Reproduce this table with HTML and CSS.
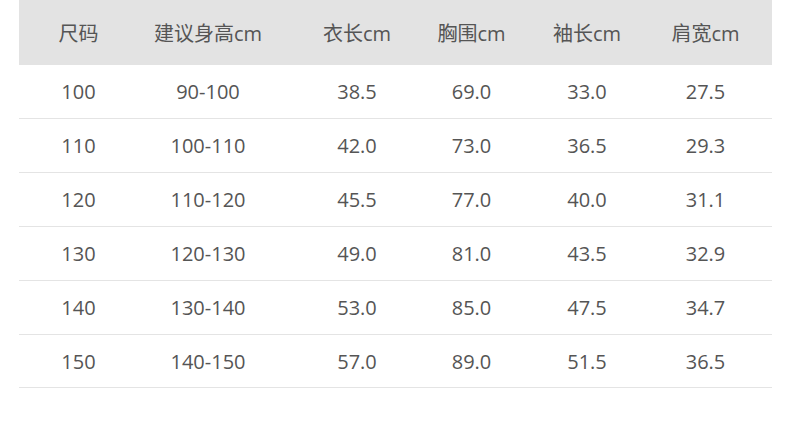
FILE: index.html
```html
<!DOCTYPE html>
<html lang="zh-CN">
<head>
<meta charset="utf-8">
<link rel="stylesheet" href="styles.css">
</head>
<body>
<div class="table">
  <div class="row head">
    <div class="c">尺码</div><div class="c">建议身高cm</div><div class="c">衣长cm</div><div class="c">胸围cm</div><div class="c">袖长cm</div><div class="c">肩宽cm</div>
  </div>
  <div class="row"><div class="c">100</div><div class="c">90-100</div><div class="c">38.5</div><div class="c">69.0</div><div class="c">33.0</div><div class="c">27.5</div></div>
  <div class="row"><div class="c">110</div><div class="c">100-110</div><div class="c">42.0</div><div class="c">73.0</div><div class="c">36.5</div><div class="c">29.3</div></div>
  <div class="row"><div class="c">120</div><div class="c">110-120</div><div class="c">45.5</div><div class="c">77.0</div><div class="c">40.0</div><div class="c">31.1</div></div>
  <div class="row"><div class="c">130</div><div class="c">120-130</div><div class="c">49.0</div><div class="c">81.0</div><div class="c">43.5</div><div class="c">32.9</div></div>
  <div class="row"><div class="c">140</div><div class="c">130-140</div><div class="c">53.0</div><div class="c">85.0</div><div class="c">47.5</div><div class="c">34.7</div></div>
  <div class="row"><div class="c">150</div><div class="c">140-150</div><div class="c">57.0</div><div class="c">89.0</div><div class="c">51.5</div><div class="c">36.5</div></div>
</div>
</body>
</html>
```
FILE: styles.css
```css
html, body {
  margin: 0;
  padding: 0;
  background: #ffffff;
}
body {
  padding: 0 18px 0 19px;
  font-family: "Open Sans", "Noto Sans CJK SC", sans-serif;
  font-size: 20px;
  color: #555555;
}
.table {
  width: 753px;
}
.row {
  display: grid;
  grid-template-columns: 119px 140px 158px 71px 160px 77px;
  height: 53px;
  align-items: center;
  border-bottom: 1px solid #e4e4e4;
}
.row:last-child {
  height: 52px;
}
.row.head {
  height: 65px;
  background: #e3e3e3;
  border-bottom: none;
  color: #555555;
}
.c {
  text-align: center;
  white-space: nowrap;
  display: flex;
  justify-content: center;
}
```
